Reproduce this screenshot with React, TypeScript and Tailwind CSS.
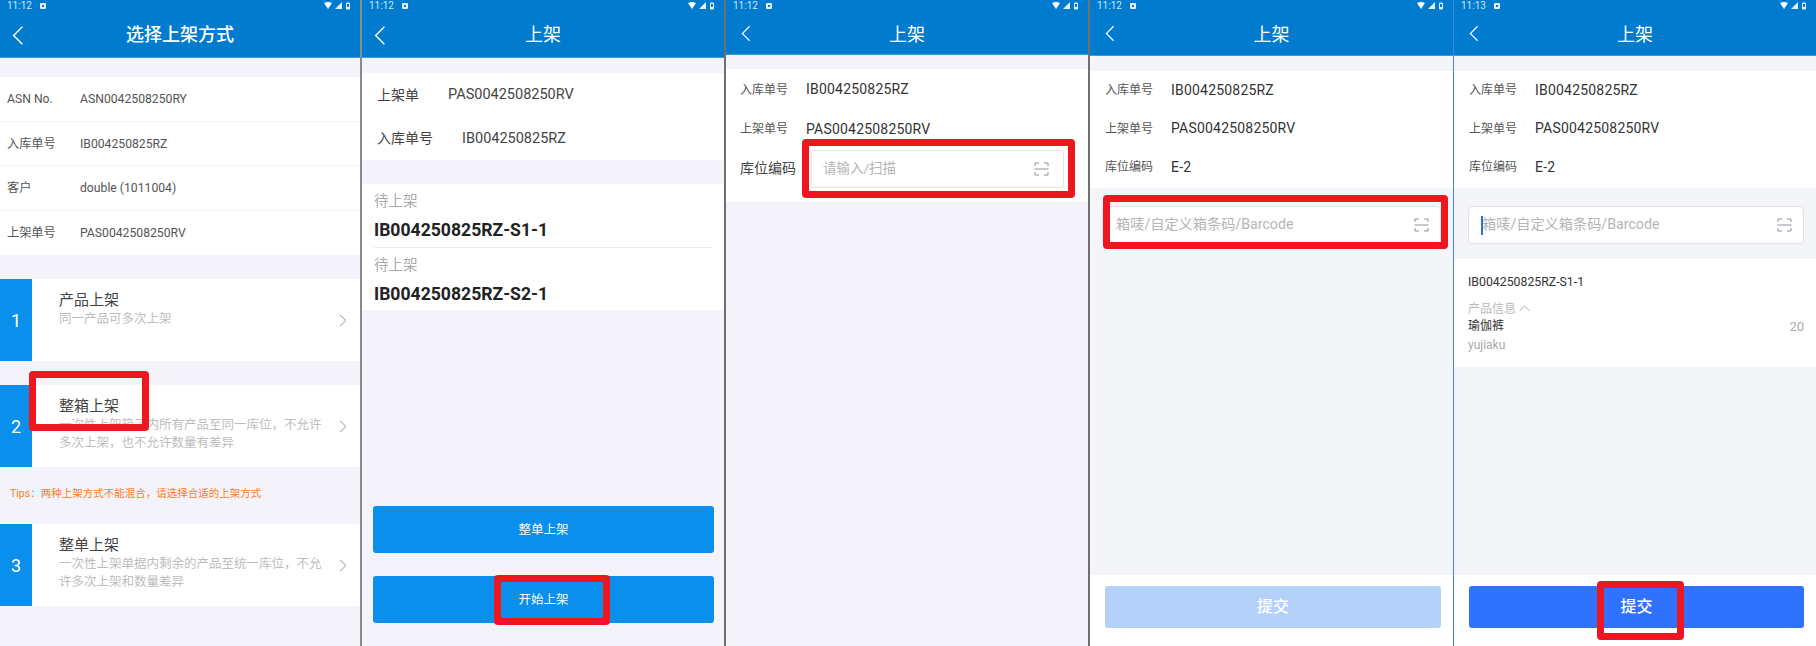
import React from "react";

function StatusBar({ time }: { time: string }) {
  return (
    <div className="flex h-[12px] items-center justify-between pl-[7px] pr-[9px] text-[10px] leading-[12px] text-[#cfe6f7]">
      <div className="flex items-center gap-[8px]">
        <span>{time}</span>
        <svg width="6" height="6" viewBox="0 0 6 6"><rect width="6" height="6" rx="1" fill="#e6f2fb" /><rect x="2" y="2" width="2" height="2" fill="#007bcd" /></svg>
      </div>
      <svg width="27" height="8" viewBox="0 0 27 8">
        <path d="M0 1 Q4 -1 8 1 L4 7 Z" fill="#fff" />
        <path d="M11 7 L18 7 L18 0 Z" fill="#e6f2fb" />
        <rect x="22" y="0.5" width="4" height="7" rx="1" fill="#e6f2fb" />
        <rect x="23" y="2" width="2" height="3" fill="#007bcd" />
      </svg>
    </div>
  );
}

function Header({ title, time, h, size }: { title: string; time: string; h: string; size: "lg" | "sm" }) {
  return (
    <div className={`${h} shrink-0 bg-[#007bcd] border-b border-[#3d9bdc]`}>
      <StatusBar time={time} />
      <div className="relative flex h-[45px] items-center justify-center text-[18px] text-white">
        <svg
          className={size === "lg" ? "absolute left-[12px] top-[13px]" : "absolute left-[15px] top-[13px]"}
          width={size === "lg" ? 12 : 10}
          height={size === "lg" ? 21 : 17}
          viewBox="0 0 11 18"
          fill="none"
          stroke="#fff"
          strokeWidth="1.3"
        >
          <path d="M9.5 1 L1.5 9 L9.5 17" />
        </svg>
        <span className={title.length > 2 ? "font-medium" : "font-normal"}>{title}</span>
      </div>
    </div>
  );
}

function Scan({ className }: { className?: string }) {
  return (
    <svg className={className} width="15" height="14" viewBox="0 0 15 14" fill="none" stroke="#8b9299" strokeWidth="1">
      <path d="M1 4 V1 H5 M10 1 H14 V4 M1 10 V13 H5 M10 13 H14 V10" />
      <path d="M0.5 7 H14.5" />
    </svg>
  );
}

function Chevron() {
  return (
    <svg width="8" height="13" viewBox="0 0 8 13" fill="none" stroke="#9a9a9a" strokeWidth="1"><path d="M1 1 L7 6.5 L1 12" /></svg>
  );
}

function KV({ label, value, last }: { label: string; value: string; last?: boolean }) {
  return (
    <div className={`flex h-[44.5px] items-center pl-[7px] pt-[1px] text-[12.2px] text-[#555] ${last ? "" : "border-b border-[#f4f4f6]"}`}>
      <span className="w-[73px]">{label}</span>
      <span>{value}</span>
    </div>
  );
}

function Method({ n, title, sub, mt }: { n: string; title: string; sub: React.ReactNode; mt: string }) {
  return (
    <div className={`flex h-[82px] bg-white ${mt}`}>
      <div className="flex w-[32px] shrink-0 items-center justify-center bg-[#0a8fec] text-[18px] text-white">{n}</div>
      <div className="w-[290px] pl-[27px] pt-[11px]">
        <div className="text-[15px] leading-[20px] text-[#444]">{title}</div>
        <div className="text-[12.5px] leading-[18px] text-[#bdbdbd]">{sub}</div>
      </div>
      <div className="flex flex-1 items-center pl-[17px]"><Chevron /></div>
    </div>
  );
}

function Info({ rows }: { rows: [string, string][] }) {
  return (
    <div className="mt-[15px] bg-white pb-[1px]">
      {rows.map(([l, v]) => (
        <div key={l} className="flex h-[38.5px] items-center pl-[15px]">
          <span className="w-[66px] text-[12px] text-[#555]">{l}</span>
          <span className="text-[14px] tracking-[0.2px] text-[#333]">{v}</span>
        </div>
      ))}
    </div>
  );
}

function Red({ className }: { className: string }) {
  return <div className={`absolute rounded-[4px] border-[7px] border-[#ef1620] ${className}`} />;
}

function Bar({ color, pr }: { color: string; pr: string }) {
  return (
    <div className={`mt-auto flex h-[71px] shrink-0 items-start bg-white pl-[15px] pt-[11px] ${pr}`}>
      <div className={`flex h-[42px] w-full items-center justify-center rounded-[3px] text-[16px] font-medium text-white ${color}`}>提交</div>
    </div>
  );
}

export default function App() {
  return (
    <div className="flex h-[646px] w-[1816px] overflow-hidden bg-[#f3f3f9] font-['Roboto','Noto_Sans_CJK_SC',sans-serif]">
      {/* 1 */}
      <section className="relative flex h-full w-[362px] shrink-0 flex-col border-r-2 border-[#8a8a8a] bg-[#f3f3f9]">
        <Header title="选择上架方式" time="11:12" h="h-[58px]" size="lg" />
        <div className="mt-[19px] bg-white">
          <KV label="ASN No." value="ASN0042508250RY" />
          <KV label="入库单号" value="IB004250825RZ" />
          <KV label="客户" value="double (1011004)" />
          <KV label="上架单号" value="PAS0042508250RV" last />
        </div>
        <Method n="1" title="产品上架" sub="同一产品可多次上架" mt="mt-[24px]" />
        <Method n="2" title="整箱上架" sub="一次性上架箱子内所有产品至同一库位，不允许多次上架，也不允许数量有差异" mt="mt-[24px]" />
        <div className="flex h-[57px] items-center pb-[3px] pl-[10px] text-[10.5px] text-[#ff7a1a]">Tips：两种上架方式不能混合，请选择合适的上架方式</div>
        <Method n="3" title="整单上架" sub="一次性上架单据内剩余的产品至统一库位，不允许多次上架和数量差异" mt="" />
        <Red className="left-[29px] top-[371px] h-[60px] w-[120px]" />
      </section>

      {/* 2 */}
      <section className="relative flex h-full w-[364px] shrink-0 flex-col border-r-2 border-[#6f6f6f] bg-[#f3f3f9]">
        <Header title="上架" time="11:12" h="h-[58px]" size="lg" />
        <div className="mt-[15px] bg-white pl-[15px] text-[14px] text-[#444]">
          <div className="flex h-[44px] items-center gap-[29px]"><span>上架单</span><span className="text-[14.5px]">PAS0042508250RV</span></div>
          <div className="flex h-[43px] items-center gap-[29px]"><span>入库单号</span><span className="text-[14.5px]">IB004250825RZ</span></div>
        </div>
        <div className="mt-[24px] bg-white px-[12px]">
          <div className="h-[64px] border-b border-[#ececee] pt-[7px]">
            <div className="text-[14.5px] leading-[22px] text-[#aaa]">待上架</div>
            <div className="text-[17.6px] font-bold leading-[34px] text-[#222]">IB004250825RZ-S1-1</div>
          </div>
          <div className="h-[62px] pt-[7px]">
            <div className="text-[14.5px] leading-[22px] text-[#aaa]">待上架</div>
            <div className="text-[17.6px] font-bold leading-[34px] text-[#222]">IB004250825RZ-S2-1</div>
          </div>
        </div>
        <div className="mt-auto flex flex-col gap-[23px] pl-[11px] pr-[10px] pb-[23px]">
          <div className="flex h-[47px] items-center justify-center rounded-[3px] bg-[#0a8fec] pt-[2px] text-[12.5px] text-white">整单上架</div>
          <div className="flex h-[47px] items-center justify-center rounded-[3px] bg-[#0a8fec] pt-[2px] text-[12.5px] text-white">开始上架</div>
        </div>
        <Red className="left-[132px] top-[575px] h-[50px] w-[116px]" />
      </section>

      {/* 3 */}
      <section className="relative flex h-full w-[364px] shrink-0 flex-col border-r-2 border-[#6f6f6f] bg-[#f3f3f9]">
        <Header title="上架" time="11:12" h="h-[55px]" size="sm" />
        <div className="mt-[14px] flex h-[133px] flex-col bg-white">
          <div className="flex h-[41px] items-center pl-[14px]">
            <span className="w-[66px] text-[12px] text-[#555]">入库单号</span>
            <span className="text-[14px] tracking-[0.2px] text-[#333]">IB004250825RZ</span>
          </div>
          <div className="flex h-[38px] items-center pl-[14px]">
            <span className="w-[66px] text-[12px] text-[#555]">上架单号</span>
            <span className="text-[14px] tracking-[0.2px] text-[#333]">PAS0042508250RV</span>
          </div>
          <div className="flex h-[41px] items-center pl-[14px] pr-[24px]">
            <span className="w-[71px] text-[14px] text-[#444]">库位编码</span>
            <div className="flex h-[38px] flex-1 items-center justify-between rounded-[3px] border border-[#e3e3e3] pl-[11px] pr-[14px] text-[13.5px] text-[#b5b5b5]">
              <span>请输入/扫描</span>
              <Scan />
            </div>
          </div>
        </div>
        <Red className="left-[76px] top-[139px] h-[59px] w-[273px]" />
      </section>

      {/* 4 */}
      <section className="relative flex h-full w-[364px] shrink-0 flex-col border-r border-[#3d86dc] bg-[#f3f5f9]">
        <Header title="上架" time="11:12" h="h-[56px]" size="sm" />
        <Info rows={[["入库单号", "IB004250825RZ"], ["上架单号", "PAS0042508250RV"], ["库位编码", "E-2"]]} />
        <div className="ml-[12px] mr-[12px] mt-[18px] flex h-[38px] items-center justify-between rounded-[4px] border border-[#e3e3e3] bg-white pl-[13px] pr-[11px] text-[14.2px] text-[#b5b5b5]">
          <span>箱唛/自定义箱条码/Barcode</span>
          <Scan />
        </div>
        <Bar color="bg-[#b3d1f9]" pr="pr-[12px]" />
        <Red className="left-[13px] top-[195px] h-[54px] w-[345px]" />
      </section>

      {/* 5 */}
      <section className="relative flex h-full min-w-0 flex-1 flex-col bg-[#f3f5f9]">
        <Header title="上架" time="11:13" h="h-[56px]" size="sm" />
        <Info rows={[["入库单号", "IB004250825RZ"], ["上架单号", "PAS0042508250RV"], ["库位编码", "E-2"]]} />
        <div className="relative ml-[14px] mr-[12px] mt-[18px] flex h-[38px] items-center justify-between rounded-[4px] border border-[#e3e3e3] bg-white pl-[13px] pr-[11px] text-[14.2px] text-[#b5b5b5]">
          <span>箱唛/自定义箱条码/Barcode</span>
          <Scan />
          <div className="absolute left-[12px] top-[9px] h-[19px] w-[2px] bg-[#2f6fe0]" />
        </div>
        <div className="mt-[15px] h-[108px] bg-white pl-[14px] pr-[12px] pt-[15px]">
          <div className="text-[12.3px] leading-[16px] text-[#333]">IB004250825RZ-S1-1</div>
          <div className="mt-[11px] flex items-center gap-[3px] text-[12px] leading-[16px] text-[#bbb]">
            <span>产品信息</span>
            <svg width="11" height="7" viewBox="0 0 11 7" fill="none" stroke="#aaa" strokeWidth="1"><path d="M0.5 6 L5.5 1 L10.5 6" /></svg>
          </div>
          <div className="flex items-center justify-between text-[12px] leading-[19px] text-[#333]">
            <span>瑜伽裤</span>
            <span className="text-[13px] text-[#aaa]">20</span>
          </div>
          <div className="text-[12px] leading-[19px] text-[#aaa]">yujiaku</div>
        </div>
        <Bar color="bg-[#2f72ff]" pr="pr-[12px]" />
        <Red className="left-[143px] top-[581px] h-[59px] w-[87px]" />
      </section>
    </div>
  );
}
